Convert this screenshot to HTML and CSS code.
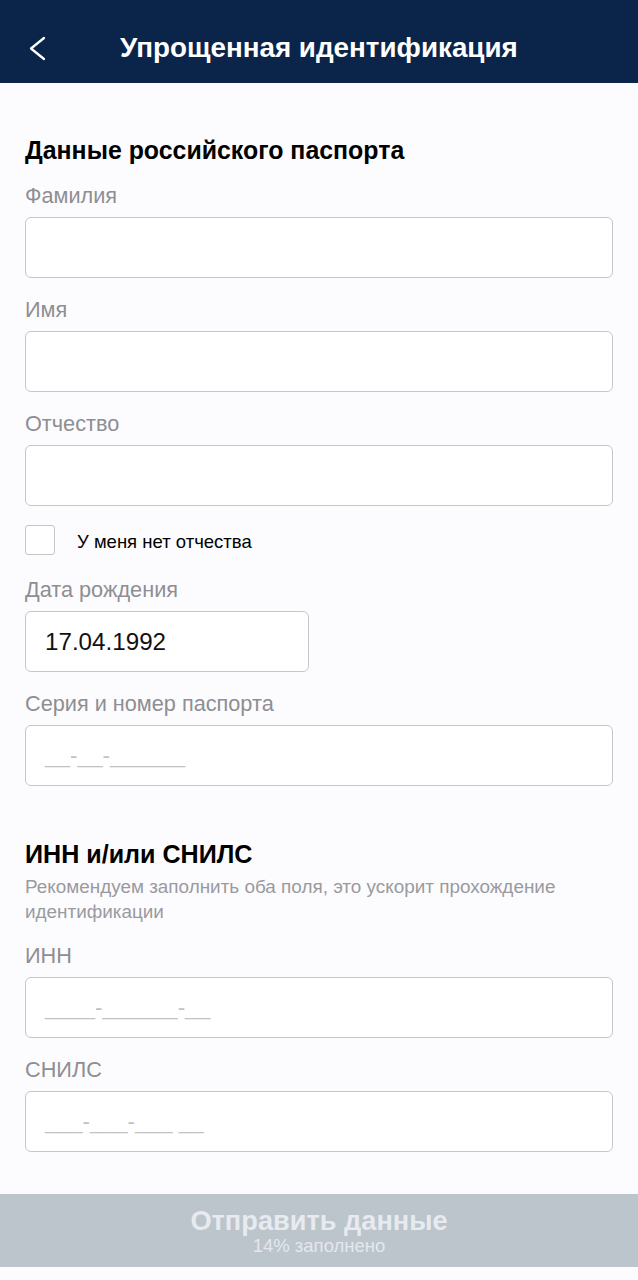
FILE: index.html
```html
<!DOCTYPE html>
<html lang="ru">
<head>
<meta charset="utf-8">
<title>Упрощенная идентификация</title>
<link rel="stylesheet" href="styles.css">
</head>
<body>
<header class="topbar">
  <button class="back" aria-label="Назад">
    <svg width="20" height="30" viewBox="0 0 20 30"><path d="M17 5 L4 15.5 L17 26" fill="none" stroke="#fff" stroke-width="2.3" stroke-linecap="round" stroke-linejoin="round"/></svg>
  </button>
  <h1 class="title">Упрощенная идентификация</h1>
</header>
<main class="content">
  <h2 class="section-title first">Данные российского паспорта</h2>
  <div class="field">
    <label class="label">Фамилия</label>
    <div class="input"></div>
  </div>
  <div class="field">
    <label class="label">Имя</label>
    <div class="input"></div>
  </div>
  <div class="field">
    <label class="label">Отчество</label>
    <div class="input"></div>
  </div>
  <div class="check-row">
    <span class="checkbox"></span>
    <span class="check-text">У меня нет отчества</span>
  </div>
  <div class="field">
    <label class="label">Дата рождения</label>
    <div class="input short"><span class="value">17.04.1992</span></div>
  </div>
  <div class="field">
    <label class="label">Серия и номер паспорта</label>
    <div class="input"><span class="mask">__-__-______</span></div>
  </div>

  <h2 class="section-title second">ИНН и/или СНИЛС</h2>
  <p class="hint">Рекомендуем заполнить оба поля, это ускорит прохождение идентификации</p>
  <div class="field">
    <label class="label">ИНН</label>
    <div class="input"><span class="mask">____-______-__</span></div>
  </div>
  <div class="field">
    <label class="label">СНИЛС</label>
    <div class="input"><span class="mask">___-___-___ __</span></div>
  </div>
</main>
<footer class="submit">
  <div class="submit-title">Отправить данные</div>
  <div class="submit-sub">14% заполнено</div>
</footer>
</body>
</html>
```
FILE: styles.css
```css
* { box-sizing: border-box; }
html, body { margin: 0; padding: 0; }
body {
  width: 638px;
  height: 1280px;
  background: #fcfcfe;
  font-family: "Liberation Sans", Arial, sans-serif;
  color: #000;
  overflow: hidden;
}
.topbar {
  height: 83px;
  background: #0b2449;
  display: flex;
  align-items: center;
  padding-top: 13px;
}
.back {
  background: none;
  border: 0;
  padding: 0;
  margin-left: 27px;
  width: 20px;
  height: 30px;
  display: flex;
}
.title {
  margin: 0 0 0 73px;
  color: #fff;
  font-size: 27.8px;
  line-height: 34px;
  font-weight: bold;
}
.content {
  padding: 0 25px;
}
.section-title {
  margin: 0;
  font-weight: bold;
  font-size: 24.9px;
  line-height: 28px;
}
.section-title.first { margin-top: 53px; margin-bottom: 19px; }
.section-title.second { font-size: 25.1px; line-height: 30px; margin-top: 53px; margin-bottom: 5px; }
.hint {
  margin: 0 0 19px;
  font-size: 18.9px;
  line-height: 25px;
  color: #9a9a9e;
}
.field { margin-bottom: 19px; }
.label {
  display: block;
  font-size: 21.7px;
  line-height: 25px;
  color: #8e8e93;
  margin-bottom: 9px;
}
.input {
  height: 61px;
  border: 1.5px solid #c6c6c8;
  border-radius: 6px;
  background: #fff;
  display: flex;
  align-items: center;
  padding-left: 19px;
}
.input.short { width: 284px; }
.value { font-size: 24.2px; color: #111; }
.mask { font-size: 22.5px; color: #c2c2c4; }
.check-row {
  display: flex;
  align-items: center;
  margin-top: 1px;
  margin-bottom: 22px;
}
.checkbox {
  width: 30px;
  height: 30px;
  border: 1.5px solid #c6c6c8;
  border-radius: 3px;
  background: #fff;
}
.check-text {
  margin-left: 22px;
  font-size: 18.5px;
  padding-top: 3px;
}
.submit {
  margin-top: 42px;
  height: 73px;
  background: #bcc4cc;
  display: flex;
  flex-direction: column;
  align-items: center;
  justify-content: center;
}
.submit-title {
  font-size: 27.2px;
  font-weight: bold;
  color: #e7ebef;
  line-height: 31px;
}
.submit-sub {
  font-size: 18.5px;
  color: #e4e8ec;
  line-height: 20px;
}
```
